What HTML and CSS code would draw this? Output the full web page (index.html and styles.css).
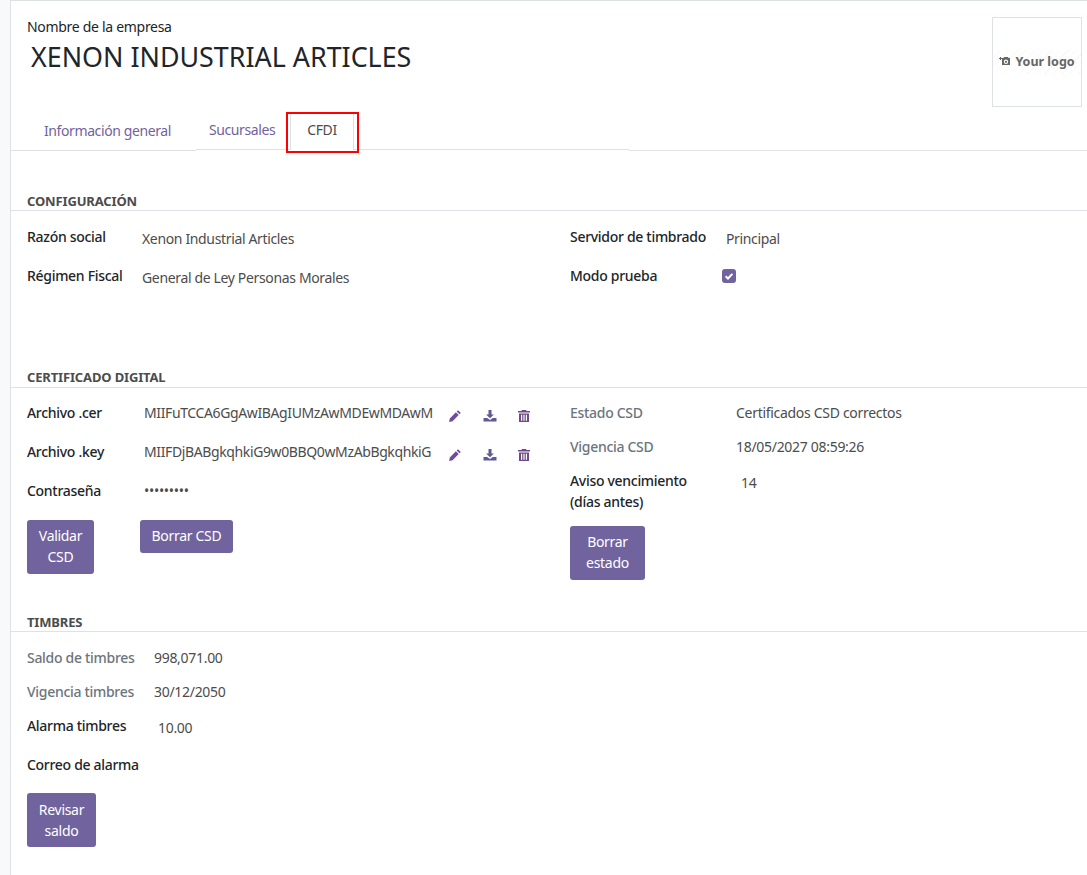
FILE: index.html
```html
<!DOCTYPE html>
<html lang="es">
<head>
<meta charset="utf-8">
<title>CFDI</title>
<link rel="stylesheet" href="styles.css">
</head>
<body>
<main class="sheet">
  <header class="head">
    <div class="title-block">
      <div class="name-label">Nombre de la empresa</div>
      <h1 class="name">XENON INDUSTRIAL ARTICLES</h1>
    </div>
    <div class="logo">
      <svg class="cam" viewBox="0 0 12 12" width="12" height="12"><path fill="#666" d="M3 3h1.400l.8-1h3.600l.8 1H11v7H3zm4 1.600A2.200 2.200 0 1 0 7 9a2.200 2.200 0 0 0 0-4.400zm0 1.100a1.100 1.100 0 1 1 0 2.200 1.100 1.100 0 0 1 0-2.200zM1 2h1v1h1v1H2v1H1V4H0V3h1z"/></svg>
      <span>Your logo</span>
    </div>
  </header>

  <nav class="tabs">
    <a class="tab t1">Información general</a>
    <a class="tab t2">Sucursales</a>
    <a class="tab t3 active">CFDI</a>
    <span class="mark"></span>
  </nav>

  <section class="sec sec-conf">
    <h2 class="sec-title">CONFIGURACIÓN</h2>
    <div class="cols">
      <div class="col">
        <div class="row r-conf"><label class="lb">Razón social</label><span class="val">Xenon Industrial Articles</span></div>
        <div class="row r-conf"><label class="lb">Régimen Fiscal</label><span class="val">General de Ley Personas Morales</span></div>
      </div>
      <div class="col col-r">
        <div class="row r-conf"><label class="lb lb-srv">Servidor de timbrado</label><span class="val">Principal</span></div>
        <div class="row r-conf"><label class="lb lb-srv">Modo prueba</label>
          <span class="check"><svg viewBox="0 0 14 14" width="14" height="14"><path d="M3.600 7.200l2.400 2.300 4.400-4.600" fill="none" stroke="#fff" stroke-width="2"/></svg></span>
        </div>
      </div>
    </div>
  </section>

  <section class="sec sec-cert">
    <h2 class="sec-title">CERTIFICADO DIGITAL</h2>
    <div class="cols">
      <div class="col">
        <div class="row r-file"><label class="lb lb-f">Archivo .cer</label><span class="val file">MIIFuTCCA6GgAwIBAgIUMzAwMDEwMDAwM</span>
          <span class="icons">
            <svg class="ic" viewBox="0 0 14 14"><use href="#i-pen"/></svg>
            <svg class="ic" viewBox="0 0 14 14"><use href="#i-down"/></svg>
            <svg class="ic" viewBox="0 0 14 14"><use href="#i-trash"/></svg>
          </span>
        </div>
        <div class="row r-file"><label class="lb lb-f">Archivo .key</label><span class="val file">MIIFDjBABgkqhkiG9w0BBQ0wMzAbBgkqhkiG</span>
          <span class="icons">
            <svg class="ic" viewBox="0 0 14 14"><use href="#i-pen"/></svg>
            <svg class="ic" viewBox="0 0 14 14"><use href="#i-down"/></svg>
            <svg class="ic" viewBox="0 0 14 14"><use href="#i-trash"/></svg>
          </span>
        </div>
        <div class="row r-pass"><label class="lb lb-f">Contraseña</label><span class="val dots">•••••••••</span></div>
        <div class="btns">
          <button class="btn btn-up b-val">Validar CSD</button>
          <button class="btn btn-up b-del">Borrar CSD</button>
        </div>
      </div>
      <div class="col col-r">
        <div class="row r-st"><label class="lb lb-st muted">Estado CSD</label><span class="val">Certificados CSD correctos</span></div>
        <div class="row r-st"><label class="lb lb-st muted">Vigencia CSD</label><span class="val">18/05/2027 08:59:26</span></div>
        <div class="row r-av"><label class="lb lb-st lb-two">Aviso vencimiento<br>(días antes)</label><span class="val v-av">14</span></div>
        <button class="btn btn-up b-est">Borrar estado</button>
      </div>
    </div>
  </section>

  <section class="sec sec-tim">
    <h2 class="sec-title">TIMBRES</h2>
    <div class="row r-t"><label class="lb lb-t muted">Saldo de timbres</label><span class="val">998,071.00</span></div>
    <div class="row r-t"><label class="lb lb-t muted">Vigencia timbres</label><span class="val">30/12/2050</span></div>
    <div class="row r-t r-alarm"><label class="lb lb-t">Alarma timbres</label><span class="val v-al">10.00</span></div>
    <div class="row r-t r-mail"><label class="lb lb-t">Correo de alarma</label></div>
    <button class="btn b-rev">Revisar saldo</button>
  </section>
</main>

<svg class="defs" width="0" height="0">
  <defs>
    <g id="i-pen" fill="#714b9e"><path d="M9 1.200l2.800 2.800-1.300 1.300L7.700 2.500zM6.900 3.300l2.800 2.800-6.100 6.100-3.500.7.700-3.500z"/></g>
    <g id="i-down" fill="#5f5a96"><path d="M5.500 1h3v4.400h2.400L7 9.300 3.100 5.400h2.400zM.5 9h3.700L7 11l2.800-2h3.700v3.600H.5z"/></g>
    <g id="i-trash" fill="#6f4a85"><path d="M5 1h4l.6 1H13v1.400H1V2h3.400zM2 4.400h10V13H2zm2 1.300v6h1.200v-6zm2.400 0v6h1.200v-6zm2.400 0v6H10v-6z"/></g>
  </defs>
</svg>
</body>
</html>
```
FILE: styles.css
```css
* { box-sizing: border-box; }
html, body { margin: 0; padding: 0; }
body {
  background: #f8f9fa;
  font-family: "Noto Sans", "Open Sans", sans-serif;
  font-size: 14px;
  letter-spacing: -0.3px;
  color: #4c4c4c;
  padding-left: 10px;
  height: 875px;
  overflow: hidden;
}
.sheet {
  background: #fff;
  border: 1px solid #dee2e6;
  border-right: 0;
  border-bottom: 0;
  height: 875px;
}
.head {
  display: flex;
  justify-content: space-between;
  padding: 16px 5px 0 16px;
  height: 111px;
}
.name-label { color: #212529; font-size: 14px; line-height: 20px; }
.name {
  margin: 2px 0 0 4px;
  font-size: 26.850px;
  font-weight: 400;
  line-height: 36px;
  letter-spacing: 0;
  color: #212529;
}
.logo {
  width: 90px;
  height: 90px;
  border: 1px solid #dee2e6;
  display: flex;
  align-items: center;
  justify-content: center;
  gap: 4px;
  padding-bottom: 2px;
  font-size: 12.500px;
  font-weight: 700;
  letter-spacing: 0;
  color: #666;
  background: repeating-linear-gradient(135deg, #fff 0 5px, #f8f8f8 5px 6px) center / 100% 24px no-repeat;
}
.tabs {
  position: relative;
  height: 39px;
  display: flex;
  background:
    linear-gradient(#dee2e6, #dee2e6) 0 38px / 185px 1px no-repeat,
    linear-gradient(#dee2e6, #dee2e6) 185px 37px / 433px 1px no-repeat,
    linear-gradient(#e2e2e2, #e2e2e2) 618px 38px / 100% 1px no-repeat;
}
.tab { line-height: 38px; color: #71639e; white-space: nowrap; letter-spacing: -0.4px; }
.t1 { margin-left: 33px; width: 165px; }
.t2 { width: 81px; line-height: 36px; }
.t3 {
  width: 64px;
  color: #4c4c4c;
  text-align: center;
  background: #fff;
  border-left: 1px solid #dee2e6;
  border-right: 1px solid #dee2e6;
  height: 38px;
  line-height: 36px;
}
.mark {
  position: absolute;
  left: 275px;
  top: 0;
  width: 73px;
  height: 41px;
  border: 2px solid #f00;
}
.sec-title {
  margin: 0;
  padding-left: 16px;
  font-size: 13px;
  line-height: 19px;
  letter-spacing: -0.15px;
  font-weight: 700;
  color: #4c4c4c;
  border-bottom: 1px solid #dee2e6;
  height: 19px;
}
.sec-cert .sec-title { line-height: 17px; }
.sec-conf { margin-top: 41px; height: 177px; }
.sec-cert { height: 244px; }
.cols { display: flex; padding-left: 16px; }
.col { width: 543px; flex: none; }
.row { display: flex; }
.lb { color: #212529; flex: none; font-weight: 500; }
.muted { color: #6c757d; }
.val { color: #4c4c4c; }
.r-conf { height: 39px; }
.sec-conf .cols { padding-top: 17px; }
.r-conf .lb { width: 115px; margin-top: -1px; }
.r-conf .val { padding-top: 1px; letter-spacing: -0.35px; }
.r-conf .lb-srv { width: 156px; }
.check {
  width: 14px;
  height: 14px;
  border-radius: 3px;
  background: #71639e;
  margin: 2px 0 0 -4px;
  display: block;
}
.check svg { display: block; }
.sec-cert .cols { padding-top: 15px; }
.r-file { height: 39px; align-items: flex-start; }
.lb-f { width: 117px; }
.file { width: 290px; white-space: nowrap; letter-spacing: -0.38px; }
.icons { display: flex; gap: 20px; margin-left: 15px; padding-top: 6px; }
.ic { width: 14px; height: 14px; display: block; }
.r-pass { height: 39px; }
.btns { display: flex; gap: 46px; align-items: flex-start; }
.btn {
  display: block;
  font: inherit;
  letter-spacing: inherit;
  color: #fff;
  background: #71639e;
  border: 0;
  border-radius: 3px;
  padding: 6px 10px;
  line-height: 21px;
  text-align: center;
}
.btn-up { padding: 5px 10px 7px; }
.b-val { width: 67px; }
.b-del { width: 93px; }
.r-st { height: 34px; }
.lb-st { width: 166px; }
.r-av { height: 55px; }
.lb-two { line-height: 21px; margin-top: -1px; }
.v-av { padding: 2px 0 0 5px; }
.b-est { width: 75px; }
.sec-tim .row { padding-left: 16px; }
.sec-tim .sec-title + .row { margin-top: 16px; }
.r-t { height: 34px; }
.r-alarm { height: 39px; }
.r-mail { height: 38px; }
.lb-t { width: 127px; }
.v-al { padding: 2px 0 0 4px; }
.b-rev { width: 69px; margin-left: 16px; }
.defs { position: absolute; }
```
